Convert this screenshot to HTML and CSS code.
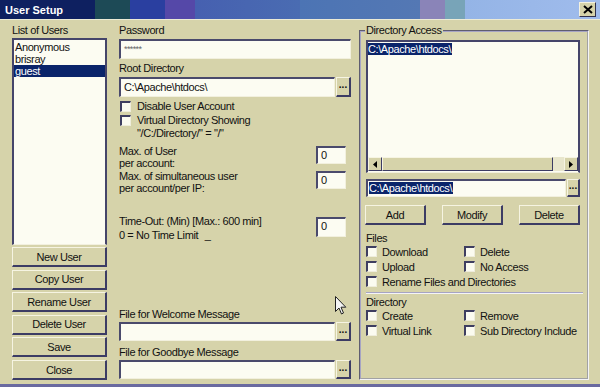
FILE: index.html
```html
<!DOCTYPE html>
<html lang="en">
<head>
    <meta charset="UTF-8">
    <meta name="viewport" content="width=device-width, initial-scale=1.0">
    <title>User Setup</title>
    <link rel="stylesheet" href="styles.css">
</head>
<body>
    <div class="window">
        <div class="titlebar">
            <span class="title">User Setup</span>
            <span class="close-btn">
                <svg width="10" height="9" viewBox="0 0 10 9"><path d="M1 1 L9 8 M9 1 L1 8" stroke="#000" stroke-width="2"/></svg>
            </span>
        </div>

        <div class="dialog">
            <!-- users -->
            <div class="col-users">
                <div class="label">List of Users</div>
                <div class="listbox users">
                    <div class="item">Anonymous</div>
                    <div class="item">brisray</div>
                    <div class="item selected">guest</div>
                </div>
                <div class="btn-stack">
                    <button class="btn">New User</button>
                    <button class="btn">Copy User</button>
                    <button class="btn">Rename User</button>
                    <button class="btn">Delete User</button>
                    <button class="btn">Save</button>
                    <button class="btn">Close</button>
                </div>
            </div>

            <!-- account settings -->
            <div class="col-main">
                <div class="label">Password</div>
                <div class="edit pw">******</div>
                <div class="label gap">Root Directory</div>
                <div class="browse-row">
                    <div class="edit">C:\Apache\htdocs\</div>
                    <span class="dots">...</span>
                </div>
                <div class="check first"><span class="box"></span>Disable User Account</div>
                <div class="check"><span class="box"></span>Virtual Directory Showing</div>
                <div class="check-note">"/C:/Directory/" = "/"</div>

                <div class="num-row r1">
                    <div class="num-text">Max. of User<br>per account:</div>
                    <div class="edit num">0</div>
                </div>
                <div class="num-row r2">
                    <div class="num-text">Max. of simultaneous user<br>per account/per IP:</div>
                    <div class="edit num">0</div>
                </div>
                <div class="num-row r3">
                    <div class="num-text tall">Time-Out: (Min) [Max.: 600 min]<br>0 = No Time Limit <span class="uline">_</span></div>
                    <div class="edit num">0</div>
                </div>

                <div class="messages">
                    <div class="label">File for Welcome Message</div>
                    <div class="browse-row msg">
                        <div class="edit"></div>
                        <span class="dots">...</span>
                    </div>
                    <div class="label gap2">File for Goodbye Message</div>
                    <div class="browse-row msg">
                        <div class="edit"></div>
                        <span class="dots">...</span>
                    </div>
                </div>
            </div>

            <!-- directory access -->
            <fieldset class="group">
                <legend>Directory Access</legend>
                <div class="listbox dirs">
                    <div class="dir-items">
                        <span class="hl">C:\Apache\htdocs\</span>
                    </div>
                    <div class="hscroll">
                        <span class="arrow">
                            <svg width="4" height="7" viewBox="0 0 4 7"><path d="M4 0 L0 3.5 L4 7 Z" fill="#000"/></svg>
                        </span>
                        <span class="thumb"></span>
                        <span class="track"></span>
                        <span class="arrow">
                            <svg width="4" height="7" viewBox="0 0 4 7"><path d="M0 0 L4 3.5 L0 7 Z" fill="#000"/></svg>
                        </span>
                    </div>
                </div>
                <div class="browse-row dir-edit">
                    <div class="edit"><span class="hl">C:\Apache\htdocs\</span></div>
                    <span class="dots">...</span>
                </div>
                <div class="dir-buttons">
                    <button class="btn">Add</button>
                    <button class="btn">Modify</button>
                    <button class="btn">Delete</button>
                </div>

                <div class="sub-label">Files</div>
                <div class="check-grid">
                    <div class="check"><span class="box"></span>Download</div>
                    <div class="check"><span class="box"></span>Delete</div>
                    <div class="check"><span class="box"></span>Upload</div>
                    <div class="check"><span class="box"></span>No Access</div>
                    <div class="check wide"><span class="box"></span>Rename Files and Directories</div>
                </div>
                <div class="separator"></div>
                <div class="sub-label dir">Directory</div>
                <div class="check-grid">
                    <div class="check"><span class="box"></span>Create</div>
                    <div class="check"><span class="box"></span>Remove</div>
                    <div class="check"><span class="box"></span>Virtual Link</div>
                    <div class="check"><span class="box"></span>Sub Directory Include</div>
                </div>
            </fieldset>
        </div>

        <svg class="cursor" width="12" height="20" viewBox="0 0 12 20">
            <path d="M0.5 0.5 L0.5 15.5 L4 12 L6.5 18 L8.5 17 L6 11.2 L10.8 11.2 Z" fill="#f4f4f4" stroke="#222" stroke-width="1"/>
        </svg>
    </div>
</body>
</html>
```

FILE: styles.css
```css
body {
    margin: 0;
    font-family: "Liberation Sans", Arial, sans-serif;
    font-size: 11px;
    letter-spacing: -0.4px;
    color: #111;
}

.window {
    position: relative;
    width: 600px;
    height: 387px;
    background-color: #d6d3aa;
    overflow: hidden;
}

.titlebar {
    height: 19px;
    display: flex;
    align-items: center;
    justify-content: space-between;
    padding: 0 5px;
    border-bottom: 1px solid #ecebd6;
    background: linear-gradient(to right,
        #0e2060 0px, #0e2060 95px,
        #1d4a56 95px, #1d4a56 130px,
        #2a3fa0 130px, #2a3fa0 165px,
        #5548a8 165px, #5548a8 195px,
        #4660b0 195px, #4a6cb2 300px,
        #4c74b4 300px, #5478b4 420px,
        #8a84b8 420px, #8a84b8 445px,
        #78a4b8 445px, #78a4b8 465px,
        #94b4e6 465px, #a0bcec 600px);
}

.title {
    color: #fff;
    font-weight: bold;
    letter-spacing: 0;
}

.close-btn {
    width: 15px;
    height: 13px;
    display: flex;
    align-items: center;
    justify-content: center;
    background-color: #d6d3aa;
    border-top: 1px solid #f4f2e0;
    border-left: 1px solid #f4f2e0;
    border-right: 1px solid #30304c;
    border-bottom: 1px solid #30304c;
    margin-right: -1px;
}

.dialog {
    display: flex;
    box-sizing: border-box;
    height: 367px;
    padding: 4px 11px 4px 12px;
    border-bottom: 3px solid #6a6aa0;
}

.label {
    height: 13px;
    line-height: 13px;
}

/* left column */
.col-users {
    width: 96px;
    display: flex;
    flex-direction: column;
}

.listbox {
    background-color: #fcfcf2;
    border-top: 2px solid #45456a;
    border-left: 2px solid #45456a;
    border-right: 1px solid #b8b6a0;
    border-bottom: 1px solid #f2f0de;
}

.users {
    margin-top: 1px;
    height: 204px;
    padding-top: 1px;
    border-right: 2px solid #45456a;
}

.item {
    height: 12px;
    line-height: 12px;
    padding-left: 1px;
}

.item.selected {
    background-color: #0a246a;
    color: #fff;
}

.btn-stack {
    display: flex;
    flex-direction: column;
    gap: 2.6px;
    margin-top: 2px;
}

.btn {
    height: 20px;
    padding: 0;
    font-family: inherit;
    font-size: 11px;
    letter-spacing: -0.4px;
    color: #111;
    background-color: #d6d3aa;
    border-top: 1px solid #f6f4e2;
    border-left: 1px solid #f6f4e2;
    border-right: 2px solid #3c3c64;
    border-bottom: 2px solid #3c3c64;
}

/* middle column */
.col-main {
    width: 232px;
    margin-left: 12px;
    display: flex;
    flex-direction: column;
}

.edit {
    height: 20px;
    line-height: 17px;
    padding-left: 3px;
    background-color: #fcfcf2;
    border-top: 2px solid #4a4a6c;
    border-left: 2px solid #4a4a6c;
    border-right: 1px solid #f2f0de;
    border-bottom: 1px solid #f2f0de;
    box-sizing: border-box;
    white-space: nowrap;
    overflow: hidden;
}

.pw {
    margin-top: 2px;
    font-size: 9px;
    letter-spacing: -0.6px;
    color: #666;
}

.label.gap {
    margin-top: 3px;
}

.browse-row {
    display: flex;
    margin-top: 2px;
}

.browse-row .edit {
    width: 216px;
}

.dots {
    width: 15px;
    margin-left: 1px;
    height: 20px;
    line-height: 14px;
    text-align: center;
    font-weight: bold;
    letter-spacing: 0;
    font-size: 10px;
    box-sizing: border-box;
    border-top: 1px solid #f6f4e2;
    border-left: 1px solid #f6f4e2;
    border-right: 2px solid #3c3c64;
    border-bottom: 2px solid #3c3c64;
}

.check {
    display: flex;
    align-items: center;
    height: 14px;
    white-space: nowrap;
}

.check.first {
    margin-top: 2px;
}

.box {
    width: 11px;
    height: 11px;
    flex: none;
    box-sizing: border-box;
    background-color: #fbfbf0;
    border-top: 2px solid #3e3e60;
    border-left: 2px solid #3e3e60;
    border-right: 1px solid #efeddc;
    border-bottom: 1px solid #efeddc;
    margin-left: 1px;
    margin-right: 6px;
}

.check-note {
    height: 12px;
    line-height: 12px;
    padding-left: 18px;
}

.num-row {
    display: flex;
    justify-content: space-between;
    padding-right: 5px;
}

.num-text {
    line-height: 12px;
}

.num-text.tall {
    line-height: 14px;
}

.uline {
    display: inline-block;
    margin-left: 4px;
}

.num-row .edit {
    width: 30px;
    height: 18px;
    line-height: 15px;
    margin-top: 1px;
}

.r1 {
    margin-top: 6px;
}

.r2 {
    margin-top: 1px;
}

.r3 {
    margin-top: 20px;
}

.r3 .edit {
    height: 20px;
    margin-top: 3px;
}

.messages {
    margin-top: auto;
    margin-bottom: 1px;
}

.browse-row.msg {
    margin-top: 1px;
}

.browse-row.msg .edit,
.browse-row.msg .dots {
    height: 19px;
}

.label.gap2 {
    margin-top: 5px;
}

/* directory access group */
.group {
    width: 213px;
    margin: 0 0 0 8px;
    padding: 0 7px 0 5px;
    border: 2px groove #eeeef4;
    border-color: #a6a4c4 #f4f4f8 #f4f4f8 #a6a4c4;
    display: flex;
    flex-direction: column;
}

.group legend {
    padding: 0 1px;
    margin-left: -1px;
    line-height: 13px;
}

.dirs {
    margin-top: 3px;
    height: 133px;
    display: flex;
    flex-direction: column;
    box-sizing: border-box;
    border-right: 2px solid #45456a;
}

.dir-items {
    flex: 1;
    padding-top: 1px;
}

.hl {
    background-color: #0a246a;
    color: #fff;
    padding-right: 1px;
}

.dir-items .hl {
    display: inline-block;
    line-height: 12px;
}

.hscroll {
    display: flex;
    height: 14px;
    margin: 0 0 1px 0;
}

.arrow {
    width: 14px;
    display: flex;
    align-items: center;
    justify-content: center;
    box-sizing: border-box;
    background-color: #d6d3aa;
    border-top: 1px solid #f6f4e2;
    border-left: 1px solid #f6f4e2;
    border-right: 1px solid #3c3c64;
    border-bottom: 1px solid #3c3c64;
}

.thumb {
    width: 171px;
    box-sizing: border-box;
    background-color: #d6d3aa;
    border-top: 1px solid #f6f4e2;
    border-left: 1px solid #f6f4e2;
    border-right: 1px solid #3c3c64;
    border-bottom: 1px solid #3c3c64;
}

.track {
    flex: 1;
    background-color: #e8e6cc;
}

.browse-row.dir-edit {
    margin-top: 6px;
}

.dir-edit .edit {
    width: 200px;
    height: 18px;
    line-height: 15px;
    padding-left: 1px;
}

.dir-edit .dots {
    width: 13px;
    height: 18px;
    line-height: 12px;
}

.dir-buttons {
    display: flex;
    justify-content: space-between;
    margin-top: 8px;
    margin-left: -1px;
}

.dir-buttons .btn {
    width: 61px;
}

.sub-label {
    height: 12px;
    line-height: 12px;
    margin-top: 7px;
}

.sub-label.dir {
    margin-top: 2px;
}

.check-grid {
    display: grid;
    grid-template-columns: 98px 1fr;
}

.check-grid .check {
    height: 15px;
}

.check-grid .box {
    margin-left: 0;
    margin-right: 5px;
}

.check-grid .wide {
    grid-column: 1 / 3;
}

.separator {
    height: 0;
    margin: 3px -3px 0 0;
    border-top: 1px solid #a6a4c4;
    border-bottom: 1px solid #f4f4f8;
}

.cursor {
    position: absolute;
    left: 335px;
    top: 296px;
}
```
